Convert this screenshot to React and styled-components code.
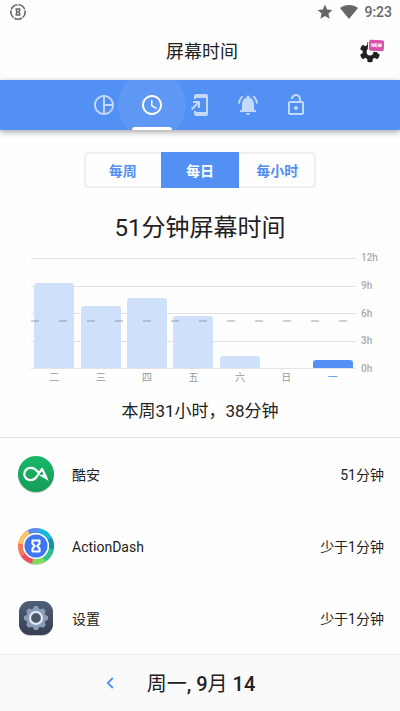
import React, { useState } from 'react';
import styled, { createGlobalStyle } from 'styled-components';
import {
  MdPieChartOutline,
  MdAccessTime,
  MdAddToHomeScreen,
  MdNotificationsActive,
  MdLockOpen,
  MdStar,
} from 'react-icons/md';

const blue = '#5290f4';
const ink = '#212121';

const GlobalStyle = createGlobalStyle`
  * { box-sizing: border-box; }
  body {
    margin: 0;
    background: #fefefe;
    color: ${ink};
    font-family: Roboto, "Noto Sans CJK SC", sans-serif;
  }
  button { font: inherit; border: 0; padding: 0; background: none; cursor: pointer; }
`;

const Screen = styled.div`
  display: flex;
  flex-direction: column;
  min-height: 100vh;
`;

const StatusBar = styled.div`
  display: flex;
  align-items: center;
  height: 24px;
  padding: 0 8px 0 9px;
  color: #666;
  font-size: 14px;
  font-weight: 500;
`;

const StatusGroup = styled.div`
  display: flex;
  align-items: center;
  gap: 6px;
  margin-left: auto;
`;

const AppBar = styled.header`
  display: grid;
  grid-template-columns: 52px 1fr 48px;
  align-items: center;
  height: 56px;
  padding: 0 6px;
`;

const AppTitle = styled.h1`
  grid-column: 2;
  margin: 0;
  text-align: center;
  font-size: 18px;
  line-height: 26px;
  font-weight: 400;
`;

const SettingsButton = styled.button`
  position: relative;
  display: grid;
  place-items: center;
  height: 48px;
  color: ${ink};
`;

const NewBadge = styled.span`
  position: absolute;
  top: 12px;
  right: 10px;
  width: 15px;
  border-radius: 2px;
  background: #d653ad;
  box-shadow: 0 0 0 1px #fefefe;
  color: #fff;
  text-align: center;
  font-size: 5px;
  line-height: 11px;
  font-weight: 900;
  transform: rotate(3deg);
`;

const Tabs = styled.nav`
  display: flex;
  justify-content: center;
  height: 50px;
  overflow: hidden;
  background: ${blue};
`;

const TabsShadow = styled.div`
  box-shadow: 0 2px 6px rgba(0, 0, 0, 0.36);
`;

const Tab = styled.button`
  position: relative;
  display: grid;
  place-items: center;
  width: 48px;
  color: ${(p) => (p.$active ? '#fff' : '#c3d9fc')};
  svg { position: relative; }
`;

const Ripple = styled.span`
  position: absolute;
  inset: -10px;
  border-radius: 50%;
  background: rgba(255, 255, 255, 0.07);
`;

const Indicator = styled.span`
  position: absolute;
  left: 4px;
  right: 4px;
  bottom: 0;
  height: 3px;
  border-radius: 3px 3px 0 0;
  background: #fff;
`;

const Main = styled.main`
  padding-top: 22px;
`;

const Segments = styled.div`
  display: grid;
  grid-template-columns: repeat(3, 1fr);
  width: 232px;
  height: 36px;
  margin: 0 auto;
  border-radius: 4px;
  box-shadow: inset 0 0 0 2px #efefef;
`;

const Segment = styled.button`
  background: ${(p) => (p.$active ? blue : 'transparent')};
  color: ${(p) => (p.$active ? '#fff' : blue)};
  font-size: 14px;
  font-weight: 700;
`;

const Total = styled.h2`
  margin: 24px 0 14px;
  text-align: center;
  font-size: 24px;
  line-height: 32px;
  font-weight: 400;
`;

const Chart = styled.section`
  display: grid;
  grid-template-columns: 1fr 39px;
  column-gap: 5px;
  padding-left: 31px;
`;

const Plot = styled.div`
  display: grid;
  height: 111px;
  > * { grid-area: 1 / 1; }
`;

const GridLines = styled.div`
  display: flex;
  flex-direction: column;
  justify-content: space-between;
`;

const GridLine = styled.span`
  height: 1px;
  background: #e2e2e2;
`;

const Columns = styled.div`
  display: grid;
  grid-template-columns: repeat(7, 1fr);
  align-items: end;
  justify-items: center;
  padding-bottom: ${(p) => (p.$bars ? '1px' : '0')};
`;

const Bar = styled.span`
  width: 40px;
  border-radius: 3px 3px 0 0;
  background: ${(p) => (p.$today ? blue : '#cfe0fb')};
`;

const AverageLine = styled.span`
  align-self: end;
  height: 2px;
  margin-bottom: 47px;
  background: repeating-linear-gradient(90deg, rgba(120, 120, 120, 0.34) 0 8px, transparent 8px 28px);
`;

const Axis = styled.div`
  display: flex;
  flex-direction: column;
  justify-content: space-between;
  margin: -6px 0;
  color: #aaa;
  font-size: 10px;
  line-height: 12px;
  font-weight: 500;
`;

const Day = styled.span`
  color: ${(p) => (p.$today ? blue : '#999')};
  font-size: 10px;
  line-height: 18px;
`;

const Summary = styled.p`
  margin: 0;
  padding: 12px 0 14px;
  border-bottom: 1px solid #e0e0e0;
  text-align: center;
  font-size: 17px;
  line-height: 24px;
`;

const AppList = styled.ul`
  margin: 0;
  padding: 0;
  list-style: none;
`;

const AppRow = styled.li`
  display: flex;
  align-items: center;
  gap: 18px;
  height: 72px;
  padding: 0 16px 0 18px;
`;

const AppText = styled.span`
  padding-top: 2px;
  margin-left: ${(p) => (p.$end ? 'auto' : '0')};
  font-size: 14px;
  line-height: 20px;
`;

const Footer = styled.footer`
  display: grid;
  grid-template-columns: 48px minmax(132px, auto) 48px;
  justify-content: center;
  align-items: center;
  height: 57px;
  margin-top: auto;
  border-top: 1px solid #f0f0f0;
  background: #fafafa;
`;

const PrevButton = styled.button`
  display: grid;
  place-items: center;
  height: 48px;
  color: ${blue};
`;

const DateLabel = styled.div`
  padding: 2px 0 0 2px;
  text-align: center;
  font-size: 20px;
  line-height: 28px;
`;

const DateNumber = styled.span`
  font-weight: 500;
`;

function StatusRing() {
  return (
    <svg width="18" height="18" viewBox="0 0 18 18" fill="none" stroke="#666">
      <circle cx="9" cy="9" r="7.2" strokeWidth="1.6" strokeDasharray="8 1.05" strokeDashoffset="2" />
      <path d="M7.300 6h3.400v1.500L9.700 9l1 1.500V12H7.300v-1.500l1-1.500-1-1.500z" strokeWidth="1.500" />
    </svg>
  );
}

function Wifi() {
  return (
    <svg width="18" height="14" viewBox="0 0 18 14">
      <path d="M9 14 0 3C2.500 1 5.500 0 9 0s6.500 1 9 3z" fill="#666" />
    </svg>
  );
}

function Gear() {
  return (
    <svg width="24" height="24" viewBox="0 0 24 24" fill="currentColor">
      <circle cx="12" cy="12" r="5.400" fill="none" stroke="currentColor" strokeWidth="4" />
      {[0, 60, 120, 180, 240, 300].map((a) => (
        <rect key={a} x="9.300" y="1.800" width="5.400" height="5" rx="1.400" transform={`rotate(${a} 12 12)`} />
      ))}
    </svg>
  );
}

function CoolapkIcon() {
  return (
    <svg width="36" height="36" viewBox="0 0 36 36" overflow="visible">
      <defs>
        <linearGradient id="green" x1="0" y1="0" x2="0" y2="1">
          <stop offset="0" stopColor="#17b867" />
          <stop offset="1" stopColor="#169c57" />
        </linearGradient>
      </defs>
      <circle cx="18" cy="19" r="18" fill="#000" opacity=".2" />
      <circle cx="18" cy="18" r="18" fill="url(#green)" />
      <path
        d="M20.500 16.500C18.300 13.500 16 11.800 12.500 11.800a6.200 6.200 0 0 0 0 12.400c3.200 0 5-1.800 6.700-4.200L24 12.800 28.500 22"
        fill="none"
        stroke="#fff"
        strokeWidth="2.200"
        strokeLinejoin="round"
        strokeLinecap="round"
      />
      <path d="M21 19.200l5.500-1 4.500 6.800z" fill="#fff" />
    </svg>
  );
}

const ringArcs = [
  ['#5b8cf0', -42],
  ['#17b7dc', 10],
  ['#168fae', 62],
  ['#2fc18c', 100],
  ['#80d957', 148],
  ['#ee4c62', 193],
  ['#f5795b', 235],
  ['#fcc469', 278],
];

function ActionDashIcon() {
  return (
    <svg width="36" height="36" viewBox="0 0 36 36" overflow="visible">
      <circle cx="18" cy="19" r="18" fill="#000" opacity=".2" />
      <circle cx="18" cy="18" r="16" fill="#fff" />
      {ringArcs.map(([color, angle]) => (
        <circle
          key={color}
          cx="18"
          cy="18"
          r="15.500"
          fill="none"
          stroke={color}
          strokeWidth="5"
          strokeDasharray="14.500 83"
          transform={`rotate(${angle - 90} 18 18)`}
        />
      ))}
      <circle cx="18" cy="18" r="13" fill="#fff" />
      <circle cx="18" cy="18" r="11.500" fill="#3f76f2" />
      <path
        d="M14.500 12.500h7v3L19.300 18l2.200 2.500v3h-7v-3l2.200-2.500-2.200-2.500z"
        fill="none"
        stroke="#fff"
        strokeWidth="2.200"
        strokeLinejoin="round"
      />
    </svg>
  );
}

function SystemSettingsIcon() {
  return (
    <svg width="36" height="36" viewBox="0 0 36 36" overflow="visible">
      <defs>
        <linearGradient id="slate" x1="0" y1="0" x2="0" y2="1">
          <stop offset="0" stopColor="#4f5f78" />
          <stop offset="1" stopColor="#363f4f" />
        </linearGradient>
      </defs>
      <rect x="1" y="2" width="34" height="34" rx="11" fill="#000" opacity=".2" />
      <rect x="1" y="1" width="34" height="34" rx="11" fill="url(#slate)" />
      <g fill="#8b9cbb">
        <circle cx="18" cy="18" r="9.800" />
        {[0, 45, 90, 135, 180, 225, 270, 315].map((a) => (
          <path key={a} d="M14.500 9.500 16.300 6h3.400l1.800 3.500z" transform={`rotate(${a} 18 18)`} />
        ))}
      </g>
      <circle cx="18" cy="18" r="6" fill="#566177" stroke="#e4e9f3" strokeWidth="2.200" />
      <circle cx="18" cy="18" r="3.800" fill="#49566b" />
    </svg>
  );
}

const tabs = [
  ['概览', MdPieChartOutline],
  ['屏幕时间', MdAccessTime],
  ['应用启动', MdAddToHomeScreen],
  ['通知', MdNotificationsActive],
  ['解锁', MdLockOpen],
];

const ranges = ['每周', '每日', '每小时'];

const days = [
  { name: '二', height: 85 },
  { name: '三', height: 62 },
  { name: '四', height: 70 },
  { name: '五', height: 52 },
  { name: '六', height: 12 },
  { name: '日', height: 0 },
  { name: '一', height: 8, today: true },
];

const hours = ['12h', '9h', '6h', '3h', '0h'];

const apps = [
  { name: '酷安', time: '51分钟', Icon: CoolapkIcon },
  { name: 'ActionDash', time: '少于1分钟', Icon: ActionDashIcon },
  { name: '设置', time: '少于1分钟', Icon: SystemSettingsIcon },
];

export default function App() {
  const [tab, setTab] = useState(1);
  const [range, setRange] = useState(1);

  return (
    <Screen>
      <GlobalStyle />
      <StatusBar>
        <StatusRing />
        <StatusGroup>
          <MdStar size={18} />
          <Wifi />
          <span>9:23</span>
        </StatusGroup>
      </StatusBar>
      <AppBar>
        <AppTitle>屏幕时间</AppTitle>
        <SettingsButton aria-label="设置">
          <Gear />
          <NewBadge>NEW</NewBadge>
        </SettingsButton>
      </AppBar>
      <TabsShadow>
        <Tabs>
          {tabs.map(([label, Icon], i) => (
            <Tab key={label} aria-label={label} $active={i === tab} onClick={() => setTab(i)}>
              {i === tab && <Ripple />}
              <Icon size={24} />
              {i === tab && <Indicator />}
            </Tab>
          ))}
        </Tabs>
      </TabsShadow>
      <Main>
        <Segments>
          {ranges.map((label, i) => (
            <Segment key={label} $active={i === range} onClick={() => setRange(i)}>
              {label}
            </Segment>
          ))}
        </Segments>
        <Total>51分钟屏幕时间</Total>
        <Chart>
          <Plot>
            <GridLines>
              {hours.map((h) => (
                <GridLine key={h} />
              ))}
            </GridLines>
            <Columns $bars>
              {days.map((d) => (
                <Bar key={d.name} $today={d.today} style={{ height: d.height }} />
              ))}
            </Columns>
            <AverageLine />
          </Plot>
          <Axis>
            {hours.map((h) => (
              <span key={h}>{h}</span>
            ))}
          </Axis>
          <Columns>
            {days.map((d) => (
              <Day key={d.name} $today={d.today}>
                {d.name}
              </Day>
            ))}
          </Columns>
        </Chart>
        <Summary>本周31小时，38分钟</Summary>
        <AppList>
          {apps.map(({ name, time, Icon }) => (
            <AppRow key={name}>
              <Icon />
              <AppText>{name}</AppText>
              <AppText $end>{time}</AppText>
            </AppRow>
          ))}
        </AppList>
      </Main>
      <Footer>
        <PrevButton aria-label="前一天">
          <svg width="8" height="12" viewBox="0 0 8 12" fill="none" stroke="currentColor" strokeWidth="1.800">
            <path d="M6.800 1 1.800 6l5 5" />
          </svg>
        </PrevButton>
        <DateLabel>
          周一<DateNumber>, 9</DateNumber>月<DateNumber> 14</DateNumber>
        </DateLabel>
      </Footer>
    </Screen>
  );
}
